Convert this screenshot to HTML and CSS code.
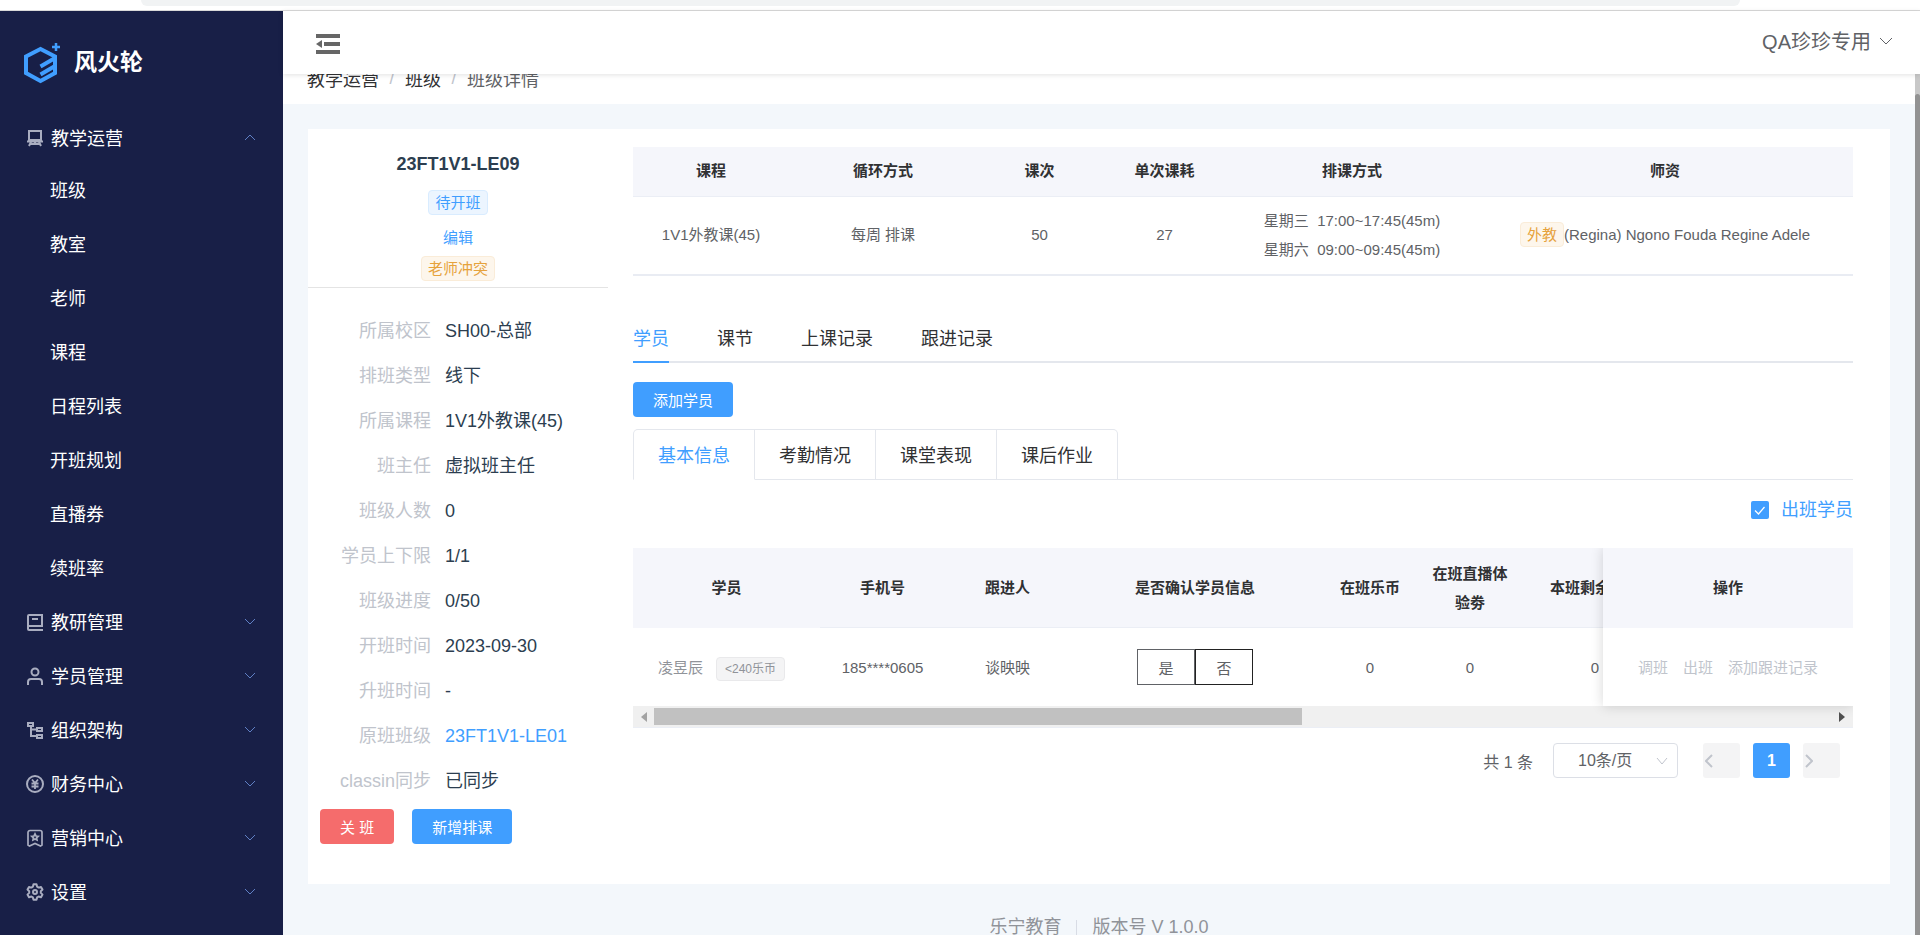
FILE: index.html
```html
<!DOCTYPE html>
<html lang="zh-CN">
<head>
<meta charset="utf-8">
<title>风火轮 - 班级详情</title>
<link rel="stylesheet" href="styles.css">
</head>
<body>
<div class="browser-edge"><div class="address-bar"></div></div>
<div class="app">
  <aside class="sidebar">
    <div class="brand">
      <svg class="brand-logo" viewBox="0 0 37 42" fill="none" stroke="#409eff" stroke-width="4">
        <path d="M31 22V13.500L16.500 6 2 13.500V30l14.500 8L31 30v-9"/>
        <path d="M31 15 16.500 23.500M31 23 16.500 31.500"/>
        <path d="M32 0v8M28 4h8" stroke-width="2.500"/>
      </svg>
      <span>风火轮</span>
    </div>
    <nav>
      <ul class="menu">
        <li>
          <a class="menu-item" href="#">
            <svg class="menu-icon" viewBox="0 0 18 18" fill="none" stroke="currentColor" stroke-width="2"><path d="M3 2h12v9H3zM1 12.500h16M5 13l-2 4M9 13v3M13 13l2 4M5 15h8"/></svg>
            <span>教学运营</span>
            <svg class="menu-arrow" viewBox="0 0 12 7"><path d="M1 6l5-5 5 5"/></svg>
          </a>
          <ul class="submenu">
            <li><a href="#">班级</a></li>
            <li><a href="#">教室</a></li>
            <li><a href="#">老师</a></li>
            <li><a href="#">课程</a></li>
            <li><a href="#">日程列表</a></li>
            <li><a href="#">开班规划</a></li>
            <li><a href="#">直播券</a></li>
            <li><a href="#">续班率</a></li>
          </ul>
        </li>
        <li><a class="menu-item" href="#">
          <svg class="menu-icon" viewBox="0 0 18 18" fill="none" stroke="currentColor" stroke-width="2"><path d="M17 17H3a1 1 0 0 1-1-1V3a1 1 0 0 1 1-1h13v11H2M6 6h6"/></svg>
          <span>教研管理</span><svg class="menu-arrow" viewBox="0 0 12 7"><path d="M1 1l5 5 5-5"/></svg></a></li>
        <li><a class="menu-item" href="#">
          <svg class="menu-icon" viewBox="0 0 18 18" fill="none" stroke="currentColor" stroke-width="2"><circle cx="9" cy="5" r="3.500"/><path d="M2 18v-3a3 3 0 0 1 3-3h8a3 3 0 0 1 3 3v3"/></svg>
          <span>学员管理</span><svg class="menu-arrow" viewBox="0 0 12 7"><path d="M1 1l5 5 5-5"/></svg></a></li>
        <li><a class="menu-item" href="#">
          <svg class="menu-icon" viewBox="0 0 18 18" fill="none" stroke="currentColor" stroke-width="2"><path d="M2 2h5v3H2zM11 7h5v3h-5zM11 14h5v3h-5zM5 5v10h6M5 8.500h6"/></svg>
          <span>组织架构</span><svg class="menu-arrow" viewBox="0 0 12 7"><path d="M1 1l5 5 5-5"/></svg></a></li>
        <li><a class="menu-item" href="#">
          <svg class="menu-icon" viewBox="0 0 18 18" fill="none" stroke="currentColor" stroke-width="2"><circle cx="9" cy="9" r="8"/><path d="M6 4.500l3 3.500 3-3.500M5.500 8.500h7M5.500 11.500h7M9 8v6" stroke-width="1.800"/></svg>
          <span>财务中心</span><svg class="menu-arrow" viewBox="0 0 12 7"><path d="M1 1l5 5 5-5"/></svg></a></li>
        <li><a class="menu-item" href="#">
          <svg class="menu-icon" viewBox="0 0 18 18" fill="none" stroke="currentColor" stroke-width="1.700"><path d="M4 1.500h10a2 2 0 0 1 2 2V16l-1.500 1-5.500-2.500L3.500 17 2 16V3.500a2 2 0 0 1 2-2z"/><path d="M9 5l1 2 2.200.300-1.600 1.500.400 2.200-2-1-2 1 .400-2.200-1.600-1.500L8 7z"/></svg>
          <span>营销中心</span><svg class="menu-arrow" viewBox="0 0 12 7"><path d="M1 1l5 5 5-5"/></svg></a></li>
        <li><a class="menu-item" href="#">
          <svg class="menu-icon" viewBox="0 0 18 18" fill="none" stroke="currentColor" stroke-width="2" stroke-linejoin="round"><path d="M7.500 1.300h3l.600 2.400 1.500.900 2.400-.700 1.500 2.600-1.700 1.700v1.700l1.700 1.700-1.500 2.600-2.400-.700-1.500.900-.600 2.400h-3l-.600-2.400-1.500-.900-2.400.700-1.500-2.600 1.700-1.700V8.200L1.500 6.500 3 3.900l2.400.700 1.500-.900z"/><circle cx="9" cy="9" r="2"/></svg>
          <span>设置</span><svg class="menu-arrow" viewBox="0 0 12 7"><path d="M1 1l5 5 5-5"/></svg></a></li>
      </ul>
    </nav>
  </aside>

  <div class="page">
    <header class="topbar">
      <button class="fold" type="button" aria-label="收起菜单">
        <svg viewBox="0 0 24 20" fill="#666"><path d="M0 0h24v4H0zM8 8h16v4H8zM0 16h24v4H0zM0 10l6-4v8z"/></svg>
      </button>
      <button class="user" type="button">QA珍珍专用
        <svg viewBox="0 0 14 8" fill="none" stroke="#606266"><path d="M1 1l6 6 6-6"/></svg>
      </button>
    </header>

    <div class="viewport">
      <div class="content">
        <div class="breadcrumb">
          <a href="#">教学运营</a><i>/</i><a href="#">班级</a><i>/</i><span>班级详情</span>
        </div>
        <main class="card">
          <section class="summary">
            <div class="summary-head">
              <h1>23FT1V1-LE09</h1>
              <span class="tag tag-blue">待开班</span>
              <a class="edit" href="#">编辑</a>
              <span class="tag tag-orange">老师冲突</span>
            </div>
            <dl class="facts">
              <dt>所属校区</dt><dd>SH00-总部</dd>
              <dt>排班类型</dt><dd>线下</dd>
              <dt>所属课程</dt><dd>1V1外教课(45)</dd>
              <dt>班主任</dt><dd>虚拟班主任</dd>
              <dt>班级人数</dt><dd>0</dd>
              <dt>学员上下限</dt><dd>1/1</dd>
              <dt>班级进度</dt><dd>0/50</dd>
              <dt>开班时间</dt><dd>2023-09-30</dd>
              <dt>升班时间</dt><dd>-</dd>
              <dt>原班班级</dt><dd><a href="#">23FT1V1-LE01</a></dd>
              <dt>classin同步</dt><dd>已同步</dd>
            </dl>
            <div class="summary-actions">
              <button class="btn btn-danger" type="button">关 班</button>
              <button class="btn btn-primary" type="button">新增排课</button>
            </div>
          </section>

          <section class="detail">
            <table class="grid course">
              <colgroup><col class="c156"><col class="c188"><col class="c125"><col class="c125"><col class="c250"><col></colgroup>
              <thead><tr><th>课程</th><th>循环方式</th><th>课次</th><th>单次课耗</th><th>排课方式</th><th>师资</th></tr></thead>
              <tbody><tr>
                <td>1V1外教课(45)</td><td>每周 排课</td><td>50</td><td>27</td>
                <td><div>星期三&nbsp; 17:00~17:45(45m)</div><div>星期六&nbsp; 09:00~09:45(45m)</div></td>
                <td><span class="tag tag-orange">外教</span>(Regina) Ngono Fouda Regine Adele</td>
              </tr></tbody>
            </table>

            <div class="tabs">
              <button class="tab active" type="button">学员</button>
              <button class="tab" type="button">课节</button>
              <button class="tab" type="button">上课记录</button>
              <button class="tab" type="button">跟进记录</button>
            </div>
            <button class="btn btn-primary add" type="button">添加学员</button>
            <div class="card-tabs">
              <button class="card-tab active" type="button">基本信息</button>
              <button class="card-tab" type="button">考勤情况</button>
              <button class="card-tab" type="button">课堂表现</button>
              <button class="card-tab" type="button">课后作业</button>
            </div>
            <div class="filter">
              <label><input type="checkbox" checked>出班学员</label>
            </div>

            <div class="students">
              <div class="students-scroll">
                <table class="grid student-table">
                  <colgroup><col class="c187"><col class="c125"><col class="c125"><col class="c250"><col class="c100"><col class="c100"><col class="c150"><col></colgroup>
                  <thead><tr><th class="plain">学员</th><th>手机号</th><th>跟进人</th><th>是否确认学员信息</th><th>在班乐币</th><th>在班直播体验劵</th><th class="clipped">本班剩余</th><th></th></tr></thead>
                  <tbody><tr>
                    <td class="muted">凌昱辰<span class="tag tag-gray">&lt;240乐币</span></td>
                    <td>185****0605</td><td>谈映映</td>
                    <td><span class="choice"><button type="button">是</button><button type="button">否</button></span></td>
                    <td>0</td><td>0</td><td>0</td><td></td>
                  </tr></tbody>
                </table>
              </div>
              <table class="grid fixed-col">
                <thead><tr><th class="plain">操作</th></tr></thead>
                <tbody><tr><td><span class="ops"><button type="button" disabled>调班</button><button type="button" disabled>出班</button><button type="button" disabled>添加跟进记录</button></span></td></tr></tbody>
              </table>
              <div class="hscroll">
                <svg viewBox="0 0 6 10" fill="#a3a3a3"><path d="M6 0v10L0 5z"/></svg>
                <div class="hscroll-track"><div class="hscroll-thumb"></div></div>
                <svg viewBox="0 0 6 10" fill="#505050"><path d="M0 0v10l6-5z"/></svg>
              </div>
            </div>

            <div class="pager">
              <span>共 1 条</span>
              <div class="size">
                <select aria-label="每页条数"><option>10条/页</option></select>
                <svg viewBox="0 0 12 8" fill="none" stroke="#c0c4cc"><path d="M1 1l5 6 5-6"/></svg>
              </div>
              <div class="pages">
                <button type="button" disabled aria-label="上一页"><svg viewBox="0 0 8 14" fill="none" stroke="#c0c4cc" stroke-width="2"><path d="M7 1L1 7l6 6"/></svg></button>
                <button class="current" type="button">1</button>
                <button type="button" disabled aria-label="下一页"><svg viewBox="0 0 8 14" fill="none" stroke="#c0c4cc" stroke-width="2"><path d="M1 1l6 6-6 6"/></svg></button>
              </div>
            </div>
          </section>
        </main>
        <footer class="footer"><span>乐宁教育</span><i></i><span>版本号 V 1.0.0</span></footer>
      </div>
      <div class="vscroll"><div class="vscroll-thumb"></div></div>
    </div>
  </div>
</div>
</body>
</html>
```

FILE: styles.css
```css
* { box-sizing: border-box; }

body {
  margin: 0;
  height: 100vh;
  display: flex;
  flex-direction: column;
  overflow: hidden;
  background: #fff;
  color: #303133;
  font-family: "Liberation Sans", "Noto Sans CJK SC", sans-serif;
  font-size: 18px;
}

a { color: inherit; text-decoration: none; }
ul { list-style: none; margin: 0; padding: 0; }
i { font-style: normal; }
button { font-family: inherit; border: 0; background: none; padding: 0; color: inherit; }

.browser-edge {
  flex: none;
  height: 11px;
  padding: 0 180px 0 141px;
  border-bottom: 1px solid #d9d9d9;
}
.address-bar { height: 6px; background: #f1f3f4; border-radius: 0 0 16px 16px; }

.app { flex: 1; min-height: 0; display: flex; }

/* sidebar */
.sidebar { width: 283px; flex: none; background: #181f47; color: #fff; overflow: hidden; }
.brand {
  display: flex;
  gap: 13px;
  height: 99px;
  padding: 32px 0 0 24px;
  font-size: 23px;
  font-weight: 700;
  line-height: 38px;
}
.brand-logo { width: 37px; height: 42px; }
.menu-item { display: flex; align-items: center; height: 54px; padding: 0 27px 0 26px; }
.menu-item span { flex: 1; }
.menu-icon { width: 18px; height: 18px; margin: 2px 7px 0 0; color: #a9adc0; }
.menu-arrow { width: 12px; height: 7px; fill: none; stroke: #5f7fc4; }
.submenu { margin-bottom: -2px; }
.submenu a { display: block; padding-left: 50px; line-height: 54px; }

/* top bar */
.page { flex: 1; min-width: 0; display: flex; flex-direction: column; }
.topbar {
  position: relative;
  z-index: 2;
  flex: none;
  height: 63px;
  display: flex;
  justify-content: space-between;
  align-items: center;
  padding: 0 27px 0 33px;
  background: #fff;
  box-shadow: 0 1px 5px rgba(0, 0, 0, .12);
}
.fold svg { display: block; width: 24px; height: 20px; margin-top: 3px; }
.user { display: flex; align-items: center; gap: 8px; margin-bottom: 4px; font-size: 20px; color: #606266; }
.user svg { width: 14px; height: 8px; }

.viewport { flex: 1; min-height: 0; display: flex; background: #f3f7fb; }
.content { flex: 1; min-width: 0; overflow: visible; }
.vscroll { width: 5px; padding-top: 20px; background: #c8c8c8; display: flex; }
.vscroll-thumb { flex: 1; background: #929292; border-radius: 3px 3px 0 0; }

.breadcrumb {
  display: flex;
  align-items: center;
  height: 60px;
  margin-top: -30px;
  padding: 8px 25px 0 24px;
  background: #fff;
}
.breadcrumb i { width: 26px; text-align: center; color: #c0c4cc; }
.breadcrumb span { color: #606266; }

.card {
  display: flex;
  gap: 25px;
  min-height: 755px;
  margin: 25px 25px 0;
  padding: 18px 37px 0 0;
  background: #fff;
}

/* class summary */
.summary { width: 300px; flex: none; }
.summary-head {
  display: flex;
  flex-direction: column;
  align-items: center;
  height: 141px;
  border-bottom: 1px solid #e4e4e4;
}
.summary-head h1 { margin: 5px 0 13px; font-size: 18px; line-height: 25px; color: #2c3e50; }
.edit { margin: 12px 0 8px; font-size: 15px; line-height: 21px; color: #409eff; }

.tag {
  display: inline-block;
  height: 25px;
  padding: 0 6px;
  border: 1px solid;
  border-radius: 4px;
  font-size: 15px;
  line-height: 23px;
}
.tag-blue { background: #ecf5ff; border-color: #d9ecff; color: #409eff; }
.tag-orange { background: #fdf6ec; border-color: #faecd8; color: #e6a23c; }
.tag-gray { height: 24px; margin-left: 13px; padding: 0 8px; background: #f4f4f5; border-color: #e9e9eb; color: #909399; font-size: 12px; line-height: 22px; }

.facts {
  display: grid;
  grid-template-columns: 123px 1fr;
  column-gap: 14px;
  margin: 21px 0 5px;
  line-height: 45px;
}
.facts dt { text-align: right; white-space: nowrap; color: #c0c4cc; }
.facts dd { margin: 0; color: #2c3e50; }
.facts a { color: #409eff; }

.summary-actions { display: flex; gap: 18px; padding-left: 12px; }
.btn { height: 35px; padding: 0 20px; border-radius: 4px; color: #fff; font-size: 15px; }
.btn-primary { background: #409eff; }
.btn-danger { background: #f56c6c; }

/* tables */
.detail { flex: 1; min-width: 0; }
.grid { width: 100%; table-layout: fixed; border-collapse: separate; border-spacing: 0; font-size: 15px; line-height: 29px; text-align: center; }
.grid th { padding: 0 12px; background: #f5f6fb; border-bottom: 1px solid #ebeef5; color: #303133; }
.grid td { padding: 0; color: #606266; }
.grid th.plain { border-bottom-color: transparent; }
.grid td.muted { padding-right: 10px; color: #909399; }
.c100 { width: 100px; }
.c125 { width: 125px; }
.c150 { width: 150px; }
.c156 { width: 156px; }
.c187 { width: 187px; }
.c188 { width: 188px; }
.c250 { width: 250px; }

.course th { height: 50px; padding-bottom: 2px; }
.course td { height: 79px; padding-bottom: 2px; border-bottom: 2px solid #e9ecf3; }

.tabs { display: flex; gap: 48px; margin-top: 37px; border-bottom: 2px solid #e4e7ed; }
.tab { height: 50px; margin-bottom: -2px; border-bottom: 2px solid transparent; font-size: 18px; }
.tab.active { color: #409eff; border-color: #409eff; }
.add { display: block; margin: 19px 0 12px; }

.card-tabs { display: flex; border-bottom: 1px solid #e4e7ed; }
.card-tab { height: 51px; margin-bottom: -1px; padding: 0 24px 2px; border: 1px solid #e4e7ed; border-left-width: 0; font-size: 18px; }
.card-tab:first-child { border-left-width: 1px; border-top-left-radius: 5px; }
.card-tab:last-child { border-top-right-radius: 5px; }
.card-tab.active { color: #409eff; border-bottom-color: #fff; }

.filter { display: flex; justify-content: flex-end; height: 68px; line-height: 60px; color: #409eff; }
.filter label { display: flex; align-items: center; gap: 12px; height: 60px; }
.filter input {
  appearance: none;
  width: 18px;
  height: 18px;
  margin: 0;
  border-radius: 2px;
  background: #409eff url("data:image/svg+xml,%3Csvg xmlns='http://www.w3.org/2000/svg' viewBox='0 0 18 18' fill='none' stroke='white' stroke-width='1.3'%3E%3Cpath d='M4 9.500l3.500 3.500 6-7'/%3E%3C/svg%3E");
}

.students { position: relative; overflow: hidden; }
.students-scroll { overflow: hidden; }
.student-table { width: 1287px; }
.students th { height: 80px; }
.students td { height: 78px; }
.students th.clipped { padding-left: 30px; text-align: left; white-space: nowrap; }
.fixed-col { position: absolute; top: 0; right: 0; width: 250px; background: #fff; box-shadow: 0 0 12px rgba(0, 0, 0, .16); }
.choice { display: inline-flex; vertical-align: middle; }
.choice button { width: 58px; height: 36px; border: 1px solid #606266; font-size: 15px; }
.choice button + button { border-color: #222; }
.ops { display: inline-flex; gap: 15px; }
.ops button { color: #c0c4cc; font-size: 15px; }

.hscroll { display: flex; align-items: center; gap: 7px; height: 22px; padding: 0 8px; background: #f0f0f0; border-bottom: 1px solid #ebeef5; }
.hscroll svg { width: 6px; height: 10px; }
.hscroll-track { flex: 1; }
.hscroll-thumb { width: 55%; height: 17px; background: #c1c1c1; }

.pager { display: flex; justify-content: flex-end; align-items: center; padding: 15px 13px 0 0; font-size: 16px; color: #606266; }
.size { position: relative; margin: 0 25px 0 20px; }
.size select {
  appearance: none;
  display: block;
  width: 125px;
  height: 35px;
  padding: 0 24px;
  border: 1px solid #dcdfe6;
  border-radius: 4px;
  background: #fff;
  color: #606266;
  font: inherit;
}
.size svg { position: absolute; right: 10px; top: 14px; width: 12px; height: 8px; }
.pages { display: flex; gap: 13px; }
.pages button { display: flex; align-items: center; width: 37px; height: 35px; padding-left: 2px; border-radius: 3px; background: #f4f4f5; }
.pages svg { width: 8px; height: 14px; }
.pages .current { justify-content: center; padding: 0; background: #409eff; color: #fff; font-size: 16px; font-weight: 700; }

.footer { display: flex; justify-content: center; align-items: center; gap: 15px; padding-top: 30px; line-height: 27px; color: #909399; }
.footer i { width: 1px; height: 16px; background: #d8dce5; }
```
